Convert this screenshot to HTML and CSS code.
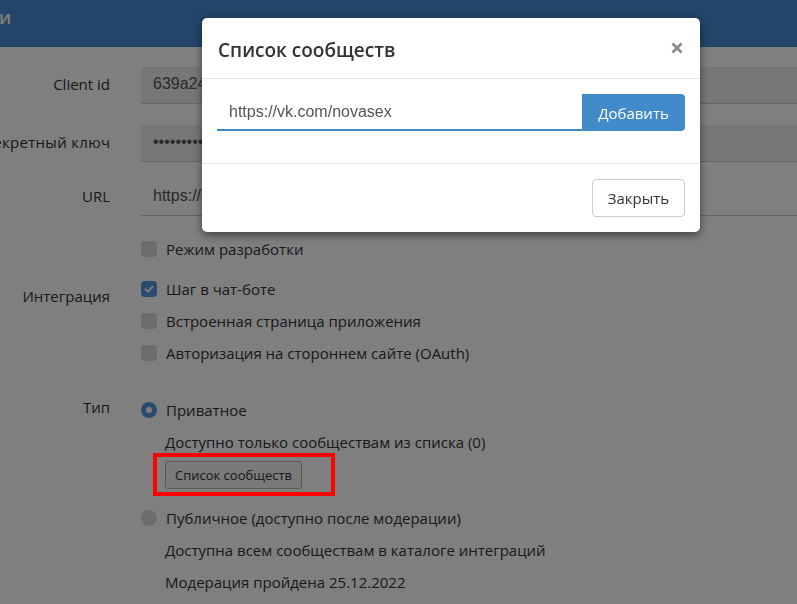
FILE: index.html
```html
<!DOCTYPE html>
<html lang="ru">
<head>
<meta charset="utf-8">
<title>Список сообществ</title>
<link rel="stylesheet" href="styles.css">
</head>
<body>
<header class="topbar"><span class="topbar-title">и</span></header>

<main class="form">
  <div class="row row-client">
    <div class="label label-mid">Client id</div>
    <div class="field field-filled">639a24e7b1c0f3d8a5</div>
  </div>
  <div class="row row-secret">
    <div class="label label-mid label-wide">Секретный ключ</div>
    <div class="field field-filled field-dots">••••••••••••••••••••</div>
  </div>
  <div class="row row-url">
    <div class="label label-mid">URL</div>
    <div class="field">https://example.ru/app</div>
  </div>
  <div class="row">
    <div class="label"></div>
    <div class="options">
      <div class="check"><span class="box"></span><span>Режим разработки</span></div>
    </div>
  </div>
  <div class="row row-integration">
    <div class="label label-integration">Интеграция</div>
    <div class="options">
      <div class="check"><span class="box box-on"><svg viewBox="0 0 16 16" width="16" height="16"><path d="M4.6 8.3 L7 10.6 L11.4 5.8" fill="none" stroke="#fff" stroke-width="1.9" stroke-linecap="round" stroke-linejoin="round"/></svg></span><span>Шаг в чат-боте</span></div>
      <div class="check"><span class="box"></span><span>Встроенная страница приложения</span></div>
      <div class="check"><span class="box"></span><span>Авторизация на стороннем сайте (OAuth)</span></div>
    </div>
  </div>
  <div class="row row-type">
    <div class="label label-type">Тип</div>
    <div class="options">
      <div class="check"><span class="radio radio-on"></span><span>Приватное</span></div>
      <div class="note">Доступно только сообществам из списка (0)</div>
      <div class="btn-wrap">
        <button class="btn-small" type="button">Список сообществ</button>
        <span class="mark"></span>
      </div>
      <div class="check check-public"><span class="radio"></span><span>Публичное (доступно после модерации)</span></div>
      <div class="note">Доступна всем сообществам в каталоге интеграций</div>
      <div class="note">Модерация пройдена 25.12.2022</div>
    </div>
  </div>
</main>

<div class="backdrop"></div>

<section class="modal">
  <div class="modal-header">
    <h4 class="modal-title">Список сообществ</h4>
    <span class="modal-close"><svg viewBox="0 0 12 12" width="12" height="12"><path d="M1.5 1.5 L10.5 10.5 M10.5 1.5 L1.5 10.5" stroke="#8a8a8a" stroke-width="2.6" stroke-linecap="butt"/></svg></span>
  </div>
  <div class="modal-body">
    <div class="input-group">
      <div class="modal-input">https://vk.com/novasex</div>
      <button class="btn-primary" type="button">Добавить</button>
    </div>
  </div>
  <div class="modal-footer">
    <button class="btn-default" type="button">Закрыть</button>
  </div>
</section>
</body>
</html>
```

FILE: styles.css
```css
html, body {
  margin: 0;
  padding: 0;
}
body {
  width: 797px;
  height: 604px;
  overflow: hidden;
  background: #ffffff;
  font-family: "Open Sans", "DejaVu Sans", sans-serif;
  font-size: 15px;
  color: #333333;
  position: relative;
}

.topbar {
  height: 47px;
  box-sizing: border-box;
  background: #488ad2;
  padding-top: 7px;
}
.topbar-title {
  display: block;
  margin-left: -1px;
  font-size: 18px;
  line-height: 20px;
  font-weight: 600;
  color: #ffffff;
}

.form {
  display: flex;
  flex-direction: column;
  padding-top: 20px;
}
.row {
  display: grid;
  grid-template-columns: 110px 1fr;
  column-gap: 31px;
}
.row-client { margin-bottom: 21px; }
.row-secret { margin-bottom: 17px; }
.row-url { margin-bottom: 17px; }
.row-integration { margin-top: 8px; }
.row-type { margin-top: 25px; }

.label {
  text-align: right;
  line-height: 20px;
  white-space: nowrap;
}
.label-mid {
  align-self: center;
  padding-bottom: 3px;
}
.label-wide {
  display: flex;
  justify-content: flex-end;
  letter-spacing: 0.3px;
  margin-right: -0.3px;
}
.label-integration { padding-top: 13px; }
.label-type { padding-top: 3px; }

.field {
  height: 37px;
  box-sizing: border-box;
  border-bottom: 1px solid #cccccc;
  padding: 0 12px 2px 12px;
  display: flex;
  align-items: center;
  font-family: "Liberation Sans", Arial, sans-serif;
  font-size: 16px;
  color: #555555;
  white-space: nowrap;
  overflow: hidden;
}
.field-filled { background: #eeeeee; }

.options {
  display: flex;
  flex-direction: column;
}
.check {
  height: 32px;
  display: flex;
  align-items: center;
  gap: 9px;
  line-height: 20px;
  white-space: nowrap;
}
.box {
  width: 16px;
  height: 16px;
  border-radius: 4px;
  background: #dadada;
  flex: none;
  display: block;
}
.box svg { display: block; }
.box-on { background: #5595dc; }

.radio {
  width: 16px;
  height: 16px;
  border-radius: 50%;
  background: #dadada;
  flex: none;
  box-sizing: border-box;
}
.radio-on {
  background: #ffffff;
  border: 5px solid #5595dc;
}

.note {
  height: 32px;
  display: flex;
  align-items: center;
  padding-left: 24px;
  line-height: 20px;
  white-space: nowrap;
}

.btn-wrap {
  position: relative;
  margin-top: 3px;
  padding-left: 24px;
  height: 28px;
}
.btn-small {
  height: 28px;
  width: 137px;
  margin: 0;
  padding: 0;
  box-sizing: border-box;
  border: 1px solid #b5b5b5;
  border-radius: 3px;
  background: #f4f4f4;
  font-family: "Open Sans", sans-serif;
  font-size: 13px;
  color: #333333;
}
.mark {
  position: absolute;
  left: 12px;
  top: -8px;
  width: 182px;
  height: 43px;
  box-sizing: border-box;
  border: 4px solid #ff0000;
  z-index: 20;
}
.check-public { margin-top: 13px; }

.backdrop {
  position: fixed;
  inset: 0;
  background: rgba(0, 0, 0, 0.5);
  z-index: 10;
}

.modal {
  position: absolute;
  left: 202px;
  top: 18px;
  width: 498px;
  height: 214px;
  box-sizing: border-box;
  background: #ffffff;
  border-radius: 5px;
  box-shadow: 0 3px 9px rgba(0, 0, 0, 0.5);
  z-index: 30;
  display: flex;
  flex-direction: column;
}
.modal-header {
  height: 61px;
  box-sizing: border-box;
  padding: 3px 16px 0 16px;
  border-bottom: 1px solid #e5e5e5;
  display: flex;
  align-items: center;
  justify-content: space-between;
}
.modal-title {
  margin: 0;
  font-size: 19px;
  font-weight: 600;
  color: #333333;
  line-height: 24px;
}
.modal-close {
  display: block;
  width: 12px;
  height: 12px;
  margin-right: 1px;
  margin-top: -3px;
}
.modal-close svg { display: block; }

.modal-body {
  padding: 15px 15px 17px 15px;
  height: 85px;
  box-sizing: border-box;
  border-bottom: 1px solid #e5e5e5;
}
.input-group {
  display: flex;
  height: 37px;
}
.modal-input {
  flex: 1;
  box-sizing: border-box;
  border-bottom: 2px solid #428bca;
  padding: 0 12px;
  display: flex;
  align-items: center;
  font-family: "Liberation Sans", Arial, sans-serif;
  font-size: 16px;
  color: #555555;
}
.btn-primary {
  width: 103px;
  height: 37px;
  margin: 0;
  padding: 0;
  border: none;
  border-radius: 0 4px 4px 0;
  background: #428bca;
  color: #ffffff;
  font-family: "Open Sans", sans-serif;
  font-size: 15px;
}

.modal-footer {
  flex: 1;
  padding: 15px 15px 0 15px;
  display: flex;
  justify-content: flex-end;
  align-items: flex-start;
}
.btn-default {
  width: 93px;
  height: 38px;
  margin: 0;
  padding: 0;
  box-sizing: border-box;
  border: 1px solid #cccccc;
  border-radius: 4px;
  background: #ffffff;
  color: #333333;
  font-family: "Open Sans", sans-serif;
  font-size: 15px;
}
```
